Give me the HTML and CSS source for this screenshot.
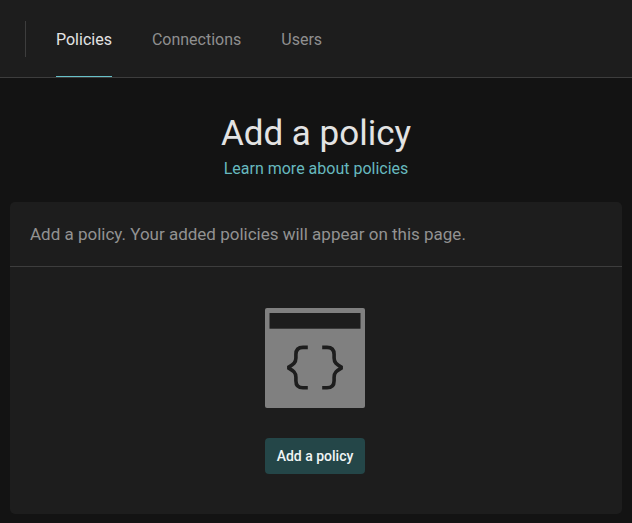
FILE: index.html
```html
<!DOCTYPE html>
<html lang="en">
<head>
  <meta charset="utf-8">
  <meta name="viewport" content="width=device-width, initial-scale=1">
  <title>Policies</title>
  <link rel="stylesheet" href="styles.css">
</head>
<body>
  <header class="topbar">
    <nav class="tabs">
      <a class="tab tab-active" href="#policies" aria-current="page">Policies</a>
      <a class="tab" href="#connections">Connections</a>
      <a class="tab" href="#users">Users</a>
    </nav>
  </header>
  <main class="content">
    <div class="intro">
      <h1 class="title">Add a policy</h1>
      <a class="learn" href="#learn">Learn more about policies</a>
    </div>
    <section class="card">
      <p class="card-head">Add a policy. Your added policies will appear on this page.</p>
      <div class="card-body">
        <svg class="art" viewBox="0 0 100 100" aria-hidden="true">
          <rect width="100" height="100" rx="2" fill="#808080"/>
          <rect x="4.5" y="5" width="91" height="15.7" fill="#1d1d1d"/>
          <g fill="none" stroke="#1d1d1d" stroke-width="3.6" stroke-linejoin="bevel">
            <path d="M42.8 39.4H38Q30.9 39.4 30.9 46.5V50C30.9 55 28 56.5 23 59.6C28 62.7 30.9 64.2 30.9 69.2V72.7Q30.9 79.8 38 79.8H42.8"/>
            <path d="M57.2 39.4H62Q69.1 39.4 69.1 46.5V50C69.1 55 72 56.5 77 59.6C72 62.7 69.1 64.2 69.1 69.2V72.7Q69.1 79.8 62 79.8H57.2"/>
          </g>
        </svg>
        <button class="add" type="button">Add a policy</button>
      </div>
    </section>
  </main>
</body>
</html>
```
FILE: styles.css
```css
* {
  box-sizing: border-box;
}

body {
  margin: 0;
  background: #131313;
  color: #e3e3e3;
  font-family: Roboto, "Liberation Sans", sans-serif;
  font-size: 16px;
  line-height: 20px;
}

.topbar {
  display: flex;
  align-items: stretch;
  height: 78px;
  padding-left: 25px;
  background: #1d1d1d;
  border-bottom: 1px solid #3d3d3d;
}

.topbar::before {
  content: "";
  align-self: center;
  width: 1px;
  height: 36px;
  background: #3d3d3d;
}

.tabs {
  display: flex;
  gap: 40px;
  margin-left: 30px;
}

.tab {
  display: flex;
  align-items: center;
  padding-top: 4px;
  border-bottom: 1px solid transparent;
  color: #8f8f8f;
  text-decoration: none;
}

.tab-active {
  border-color: #67c1c9;
  color: #e3e3e3;
}

.content {
  padding: 32px 10px 9px;
}

.intro {
  display: flex;
  flex-direction: column;
  align-items: center;
}

.title {
  margin: 0;
  font-size: 35px;
  font-weight: 400;
  line-height: 48px;
}

.learn {
  color: #67b9bf;
  line-height: 22px;
  text-decoration: none;
}

.card {
  margin-top: 22px;
  border-radius: 5px;
  background: #1d1d1d;
}

.card-head {
  margin: 0;
  padding: 22px 20px;
  border-bottom: 1px solid #3d3d3d;
  color: #929292;
  font-size: 17px;
}

.card-body {
  display: flex;
  flex-direction: column;
  align-items: center;
  gap: 30px;
  padding: 41px 22px 40px 20px;
}

.art {
  width: 100px;
  height: 100px;
}

.add {
  height: 36px;
  padding: 0 12px;
  border: 0;
  border-radius: 4px;
  background: #244648;
  color: #f0f5f5;
  font-family: Roboto, "Liberation Sans", sans-serif;
  font-size: 14px;
  font-weight: 500;
}
```
